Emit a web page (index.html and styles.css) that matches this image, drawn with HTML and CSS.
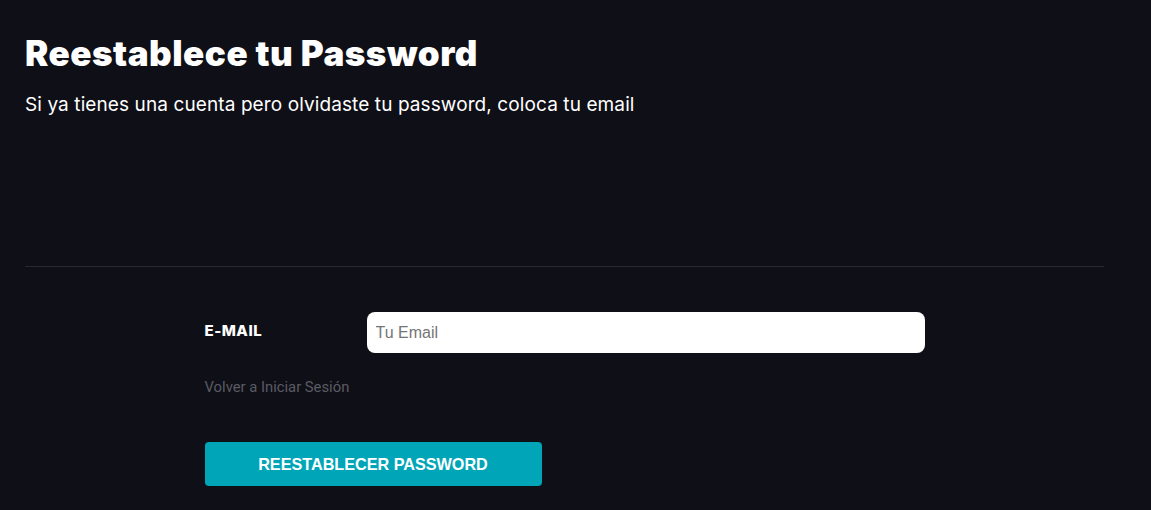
FILE: index.html
```html
<!DOCTYPE html>
<html lang="es">
<head>
<meta charset="utf-8">
<title>Reestablece tu Password</title>
<link rel="stylesheet" href="styles.css">
</head>
<body>
<main class="page">
  <header class="intro">
    <h1 class="title">Reestablece tu Password</h1>
    <p class="subtitle">Si ya tienes una cuenta pero olvidaste tu password, coloca tu email</p>
  </header>
  <hr class="divider">
  <form class="form">
    <div class="field">
      <label class="label" for="email">E-MAIL</label>
      <input class="input" id="email" type="email" placeholder="Tu Email">
    </div>
    <a class="back" href="#">Volver a Iniciar Sesión</a>
    <button class="submit" type="button">REESTABLECER PASSWORD</button>
  </form>
</main>
</body>
</html>
```
FILE: styles.css
```css
html, body {
  margin: 0;
  padding: 0;
  background: #0f0f17;
  height: 100%;
}
body {
  font-family: "Inter", "Roboto", sans-serif;
  color: #fff;
}
.page {
  padding: 0 47px 0 25px;
}
.intro {
  padding-top: 31px;
  height: 266px;
  box-sizing: border-box;
}
.title {
  margin: 0;
  font-family: "Inter", sans-serif;
  font-weight: 900;
  font-size: 35px;
  line-height: 44px;
  letter-spacing: 0.5px;
}
.subtitle {
  margin: 18px 0 0;
  font-size: 19px;
  line-height: 24px;
  font-weight: 400;
  letter-spacing: 0.1px;
}
.divider {
  margin: 0;
  border: 0;
  border-top: 1px solid #2a2a2e;
}
.form {
  width: 720px;
  margin: 45px auto 0;
  display: flex;
  flex-direction: column;
  align-items: flex-start;
}
.field {
  display: flex;
  align-items: flex-start;
  width: 100%;
}
.label {
  width: 162px;
  flex: none;
  font-weight: 800;
  font-size: 15px;
  line-height: 16px;
  margin-top: 11px;
  letter-spacing: 0.5px;
}
.input {
  flex: 1;
  height: 41px;
  box-sizing: border-box;
  border: 0;
  border-radius: 8px;
  background: #fff;
  padding: 0 9px;
  font-family: "Liberation Sans", Arial, sans-serif;
  font-size: 16px;
  color: #333;
  outline: none;
}
.input::placeholder {
  color: #757575;
}
.back {
  margin-top: 26px;
  font-family: "Roboto", sans-serif;
  font-size: 14.8px;
  line-height: 16px;
  color: #5b5b63;
  text-decoration: none;
}
.submit {
  margin-top: 47px;
  width: 337px;
  height: 44px;
  border: 0;
  border-radius: 4px;
  background: #00a5b8;
  color: #fff;
  font-family: "Liberation Sans", Arial, sans-serif;
  font-weight: 700;
  font-size: 16.2px;
  cursor: pointer;
}
```
